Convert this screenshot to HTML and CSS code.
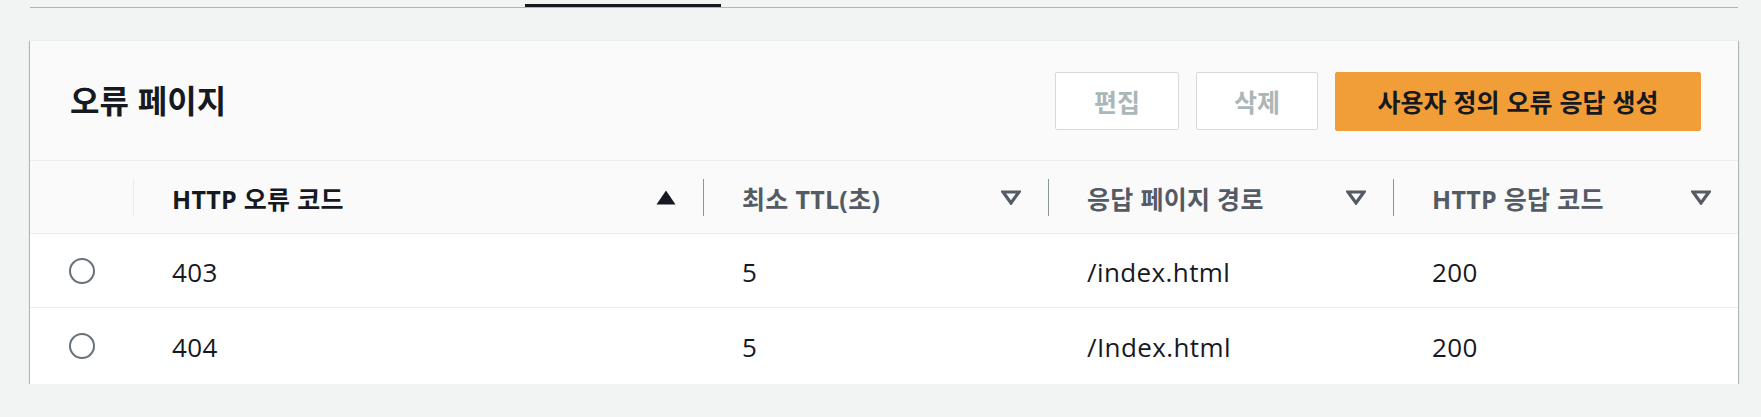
FILE: index.html
```html
<!DOCTYPE html>
<html lang="ko">
<head>
<meta charset="utf-8">
<title>오류 페이지</title>
<link rel="stylesheet" href="styles.css">
</head>
<body>
<div class="tabs"><div class="tab-active"></div></div>
<section class="card">
  <header class="card-head">
    <h2 class="title">오류 페이지</h2>
    <div class="actions">
      <button class="btn btn-disabled btn-edit">편집</button>
      <button class="btn btn-disabled btn-del">삭제</button>
      <button class="btn btn-primary">사용자 정의 오류 응답 생성</button>
    </div>
  </header>
  <div class="table">
    <div class="th th-radio"></div>
    <div class="th">
      <span class="sep sep-light"></span>
      <span class="label label-active">HTTP 오류 코드</span>
      <svg class="sort" width="20" height="15" viewBox="0 0 20 15"><path d="M10 0.5 L19.5 14.5 H0.5 Z" fill="#16191f"/></svg>
    </div>
    <div class="th">
      <span class="sep"></span>
      <span class="label">최소 TTL(초)</span>
      <svg class="sort" width="20" height="15" viewBox="0 0 20 15"><path d="M2 2 H18 L10 13 Z" fill="none" stroke="#545b64" stroke-width="3.2" stroke-linejoin="miter"/></svg>
    </div>
    <div class="th">
      <span class="sep"></span>
      <span class="label">응답 페이지 경로</span>
      <svg class="sort" width="20" height="15" viewBox="0 0 20 15"><path d="M2 2 H18 L10 13 Z" fill="none" stroke="#545b64" stroke-width="3.2" stroke-linejoin="miter"/></svg>
    </div>
    <div class="th">
      <span class="sep"></span>
      <span class="label">HTTP 응답 코드</span>
      <svg class="sort" width="20" height="15" viewBox="0 0 20 15"><path d="M2 2 H18 L10 13 Z" fill="none" stroke="#545b64" stroke-width="3.2" stroke-linejoin="miter"/></svg>
    </div>

    <div class="td td-radio"><span class="radio"></span></div>
    <div class="td">403</div>
    <div class="td">5</div>
    <div class="td">/index.html</div>
    <div class="td">200</div>

    <div class="td td-radio last"><span class="radio"></span></div>
    <div class="td last">404</div>
    <div class="td last">5</div>
    <div class="td last">/Index.html</div>
    <div class="td last">200</div>
  </div>
</section>
</body>
</html>
```

FILE: styles.css
```css
* { box-sizing: border-box; }

body {
  margin: 0;
  background: #f2f3f3;
  font-family: "Open Sans", "Noto Sans CJK KR", sans-serif;
  color: #16191f;
  font-size: 25px;
}

.tabs {
  margin: 0 23px 0 30px;
  height: 8px;
  border-bottom: 1px solid #aab7b8;
  display: flex;
  align-items: flex-end;
}

.tab-active {
  margin-left: 495px;
  width: 196px;
  height: 3px;
  background: #16191f;
}

.card {
  margin: 32px 23px 0 30px;
  background: #ffffff;
  border-top: 1px solid #eaeded;
  box-shadow: 0 1px 1px 0 rgba(0, 28, 36, 0.55), 1px 1px 1px 0 rgba(0, 28, 36, 0.2), -1px 1px 1px 0 rgba(0, 28, 36, 0.2);
  padding-bottom: 1px;
}

.card-head {
  height: 120px;
  background: #fafafa;
  border-bottom: 1px solid #eaeded;
  display: flex;
  align-items: center;
  justify-content: space-between;
  padding: 0 37px 0 40px;
}

.title {
  margin: 0 0 3px 0;
  font-family: "Noto Sans CJK KR", sans-serif;
  font-size: 32px;
  font-weight: 700;
  color: #16191f;
  line-height: 1.2;
}

.actions {
  display: flex;
  gap: 17px;
  align-items: center;
  margin-top: 1px;
}

.btn {
  font-family: "Noto Sans CJK KR", sans-serif;
  font-size: 25px;
  font-weight: 700;
  height: 58px;
  border-radius: 2px;
  padding: 0;
  display: flex;
  align-items: center;
  justify-content: center;
  line-height: 1;
}

.btn-disabled {
  background: #ffffff;
  border: 1px solid #d5dbdb;
  color: #aab7b8;
}

.btn-edit { width: 124px; }
.btn-del { width: 122px; }

.btn-primary {
  width: 366px;
  height: 59px;
  background: #f19e38;
  border: 1px solid #f19e38;
  color: #16191f;
}

.table {
  display: grid;
  grid-template-columns: 103px 570px 345px 345px 345px;
}

.th {
  height: 73px;
  background: #fafafa;
  border-bottom: 1px solid #eaeded;
  display: flex;
  align-items: center;
  font-weight: 700;
  color: #545b64;
}

.sep {
  width: 1px;
  height: 37px;
  background: #879596;
  flex: none;
}

.sep-light { background: #eaeded; }

.label {
  margin-left: 38px;
  flex: 1;
  letter-spacing: 0.3px;
  margin-top: 1px;
}

.label-active { color: #16191f; }

.sort {
  margin-right: 27px;
  flex: none;
}

.td {
  height: 74px;
  border-bottom: 1px solid #eaeded;
  display: flex;
  align-items: center;
  padding-left: 39px;
  font-size: 26px;
  letter-spacing: 0.4px;
  color: #16191f;
  padding-top: 3px;
}

.td.last {
  height: 75px;
  border-bottom: none;
}

.td-radio {
  padding-left: 39px;
  padding-top: 0;
}

.radio {
  width: 26px;
  height: 26px;
  border: 2px solid #687078;
  border-radius: 50%;
  background: #ffffff;
}
```
